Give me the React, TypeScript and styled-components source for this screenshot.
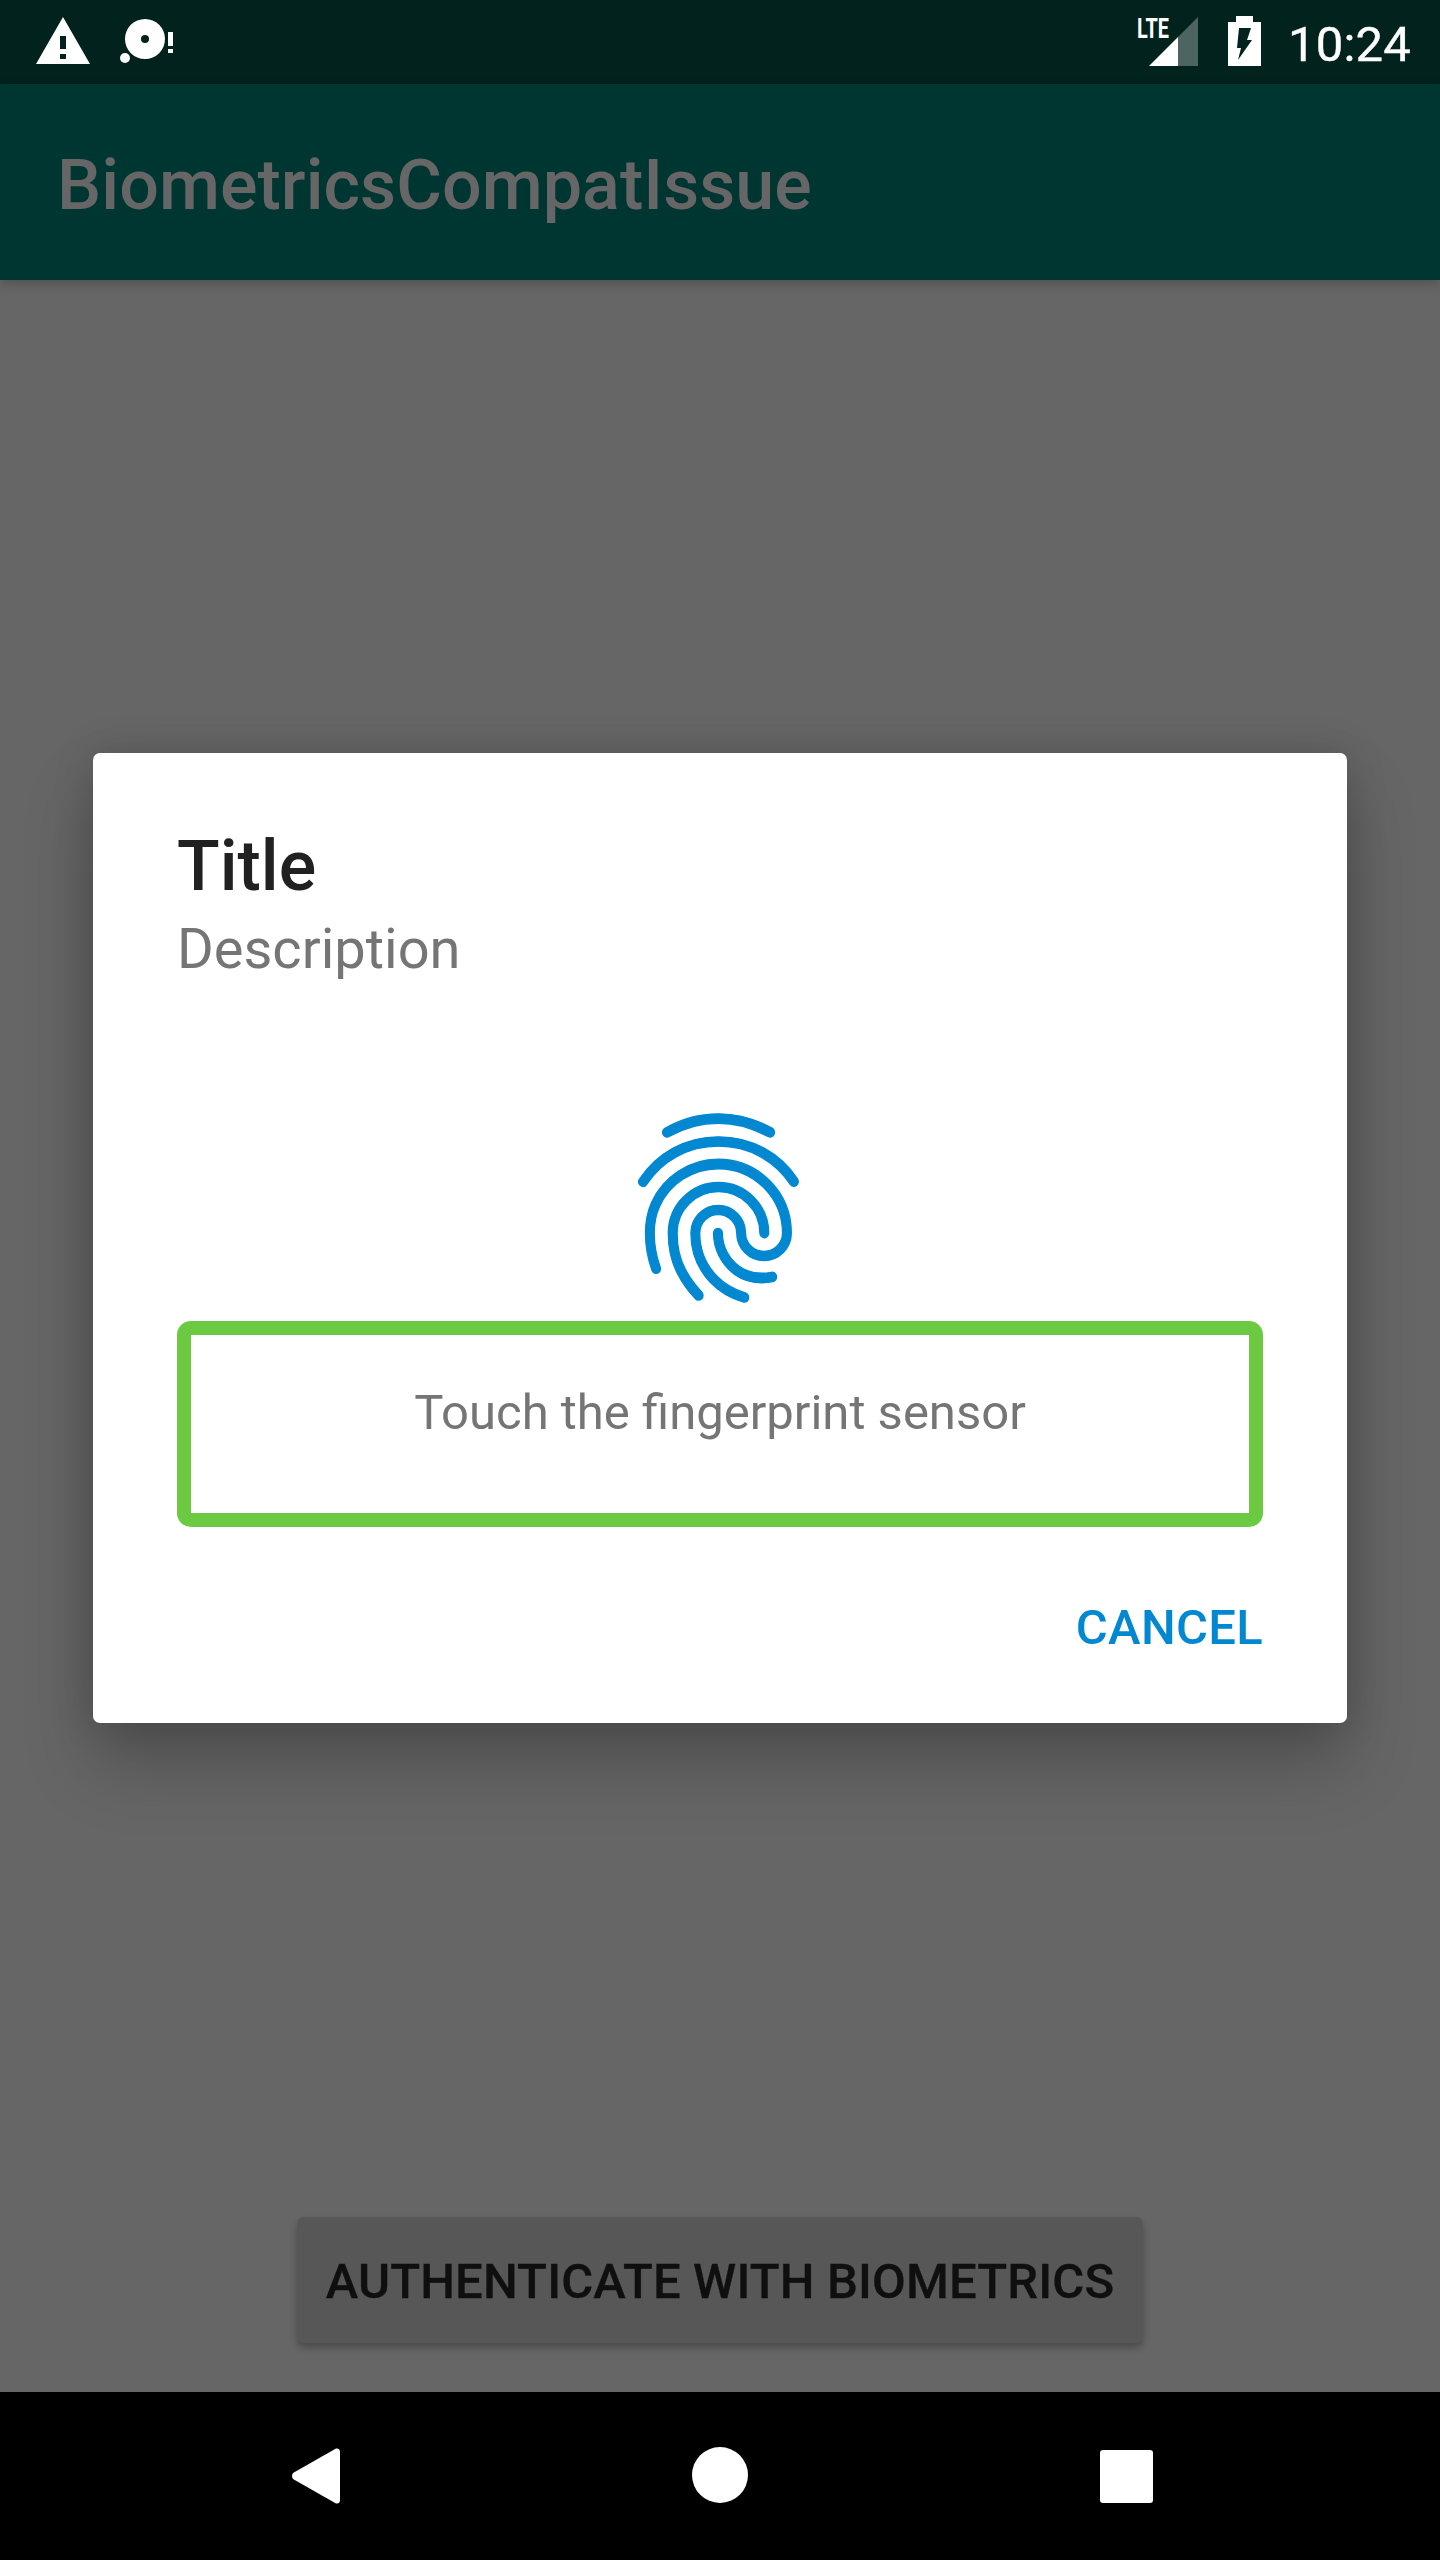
import React, {ReactElement} from 'react';
import styled, {createGlobalStyle} from 'styled-components';
import {MdFingerprint} from 'react-icons/md';

const colors = {
    statusBar: '#01221d',
    appBar: '#003632',
    appBarText: '#666666',
    scrim: '#666666',
    raised: '#575757',
    raisedText: '#0f0f0f',
    white: '#ffffff',
    title: '#212121',
    muted: '#757575',
    accent: '#0288d1',
    success: '#6cc942',
};

const GlobalStyle = createGlobalStyle`
    html, body {
        margin: 0;
        padding: 0;
        background: #000;
    }
    * {
        box-sizing: border-box;
    }
`;

const Screen = styled.div`
    position: relative;
    width: 1440px;
    height: 2560px;
    display: flex;
    flex-flow: column nowrap;
    overflow: hidden;
    font-family: Roboto, 'Liberation Sans', sans-serif;
    background: ${colors.scrim};
`;

const StatusBar = styled.div`
    height: 84px;
    flex: none;
    display: flex;
    align-items: flex-start;
    justify-content: space-between;
    padding: 0 29px 0 36px;
    background: ${colors.statusBar};
`;

const StatusGroup = styled.div`
    display: flex;
    align-items: flex-start;
`;

const StatusIcon = styled.svg<{$left?: number; $top: number}>`
    display: block;
    flex: none;
    fill: ${colors.white};
    margin-left: ${({$left}): number => $left ?? 0}px;
    margin-top: ${({$top}): number => $top}px;
`;

const Clock = styled.span`
    margin-left: 27px;
    font-size: 49px;
    line-height: 57px;
    margin-top: 16px;
    letter-spacing: 0.2px;
    -webkit-text-stroke: 0.4px ${colors.white};
    color: ${colors.white};
`;

const AppBar = styled.header`
    height: 196px;
    flex: none;
    display: flex;
    align-items: center;
    padding: 6px 57px 0;
    background: ${colors.appBar};
    box-shadow: 0 4px 10px rgba(0, 0, 0, 0.2);
    position: relative;
`;

const AppTitle = styled.h1`
    margin: 0;
    font-size: 70px;
    line-height: 82px;
    font-weight: 500;
    letter-spacing: 0.05px;
    color: ${colors.appBarText};
`;

const Content = styled.main`
    flex: 1;
    display: flex;
    align-items: flex-end;
    justify-content: center;
    padding-bottom: 49px;
`;

const RaisedButton = styled.button`
    height: 126px;
    padding: 2px 29px 0;
    border: 0;
    border-radius: 7px;
    font-family: inherit;
    font-size: 49px;
    font-weight: 500;
    letter-spacing: 0.15px;
    -webkit-text-stroke: 0.3px ${colors.raisedText};
    color: ${colors.raisedText};
    background: ${colors.raised};
    box-shadow: 0 5px 7px rgba(0, 0, 0, 0.25);
`;

const NavBar = styled.nav`
    height: 168px;
    flex: none;
    display: flex;
    align-items: flex-start;
    background: #000;
    padding-left: 291px;
`;

const Overlay = styled.div`
    position: absolute;
    top: 84px;
    left: 0;
    right: 0;
    bottom: 168px;
    display: flex;
    align-items: center;
    justify-content: center;
`;

const Dialog = styled.section`
    width: 1254px;
    height: 970px;
    padding: 72px 84px 0;
    display: flex;
    flex-flow: column nowrap;
    border-radius: 7px;
    background: ${colors.white};
    box-shadow: 0 42px 70px rgba(0, 0, 0, 0.22), 0 0 40px rgba(0, 0, 0, 0.16);
`;

const DialogTitle = styled.h2`
    margin: 0;
    font-size: 70px;
    line-height: 82px;
    font-weight: 500;
    color: ${colors.title};
`;

const DialogDescription = styled.p`
    margin: 9px 0 0;
    font-size: 56px;
    line-height: 66px;
    color: ${colors.muted};
`;

const SensorIcon = styled(MdFingerprint)`
    display: block;
    flex: none;
    width: 213px;
    height: 226px;
    margin: 113px 0 0 435px;
    color: ${colors.accent};

    path:not([fill='none']) {
        stroke: currentColor;
        stroke-width: 0.14;
    }
`;

const HintBox = styled.div`
    height: 206px;
    padding-top: 49px;
    border: 14px solid ${colors.success};
    border-radius: 14px;
    font-size: 49px;
    line-height: 57px;
    text-align: center;
    color: ${colors.muted};
`;

const DialogActions = styled.div`
    display: flex;
    justify-content: flex-end;
    margin-top: 72px;
`;

const TextButton = styled.button`
    padding: 0;
    border: 0;
    background: none;
    font-family: inherit;
    font-size: 49px;
    line-height: 57px;
    font-weight: 500;
    letter-spacing: 0.3px;
    color: ${colors.accent};
`;

export default function App(): ReactElement {
    return (
        <Screen>
            <GlobalStyle />
            <StatusBar>
                <StatusGroup>
                    <StatusIcon $top={17} width="54" height="48" viewBox="0 0 54 48">
                        <path d="M27 0 L54 47 H0 Z M24 19 V32 H30 V19 Z M24 37 V42 H30 V37 Z" fillRule="evenodd" />
                    </StatusIcon>
                    <StatusIcon $left={30} $top={18} width="56" height="46" viewBox="0 0 56 46">
                        <path d="M25 1 A20 20 0 1 0 25 41 A20 20 0 1 0 25 1 Z M25 17 A4 4 0 1 1 25 25 A4 4 0 1 1 25 17 Z" fillRule="evenodd" />
                        <circle cx="5" cy="40" r="5" />
                        <path d="M48 14 H53 V28 H48 Z M48 31 H53 V35 H48 Z" />
                    </StatusIcon>
                </StatusGroup>
                <StatusGroup>
                    <StatusIcon $top={7} width="61" height="60" viewBox="0 0 61 60">
                        <text x="0" y="31" fontFamily="Roboto, sans-serif" fontWeight="700" fontSize="28" textLength="32" lengthAdjust="spacingAndGlyphs">LTE</text>
                        <path d="M61 10 V59 H41 V30 Z" opacity="0.3" />
                        <path d="M41 30 V59 H12 Z" />
                    </StatusIcon>
                    <StatusIcon $left={30} $top={16} width="33" height="50" viewBox="0 0 33 50">
                        <path d="M8 0 H25 V6 H33 V50 H0 V6 H8 Z M11 12 H23 L19 24 H24 L10 44 L13 32 H9 Z" fillRule="evenodd" />
                    </StatusIcon>
                    <Clock>10:24</Clock>
                </StatusGroup>
            </StatusBar>
            <AppBar>
                <AppTitle>BiometricsCompatIssue</AppTitle>
            </AppBar>
            <Content>
                <RaisedButton>AUTHENTICATE WITH BIOMETRICS</RaisedButton>
            </Content>
            <NavBar>
                <StatusIcon $top={56} width="49" height="56" viewBox="0 0 49 56">
                    <path d="M45 0.5 Q49 0 49 4 V52 Q49 56 45 55.5 L2 31 Q0 28 2 25 Z" />
                </StatusIcon>
                <StatusIcon $left={352} $top={55} width="56" height="56" viewBox="0 0 56 56">
                    <circle cx="28" cy="28" r="28" />
                </StatusIcon>
                <StatusIcon $left={352} $top={58} width="53" height="53" viewBox="0 0 53 53">
                    <rect width="53" height="53" rx="3" />
                </StatusIcon>
            </NavBar>
            <Overlay>
                <Dialog>
                    <DialogTitle>Title</DialogTitle>
                    <DialogDescription>Description</DialogDescription>
                    <SensorIcon preserveAspectRatio="none" />
                    <HintBox>Touch the fingerprint sensor</HintBox>
                    <DialogActions>
                        <TextButton>CANCEL</TextButton>
                    </DialogActions>
                </Dialog>
            </Overlay>
        </Screen>
    );
}
